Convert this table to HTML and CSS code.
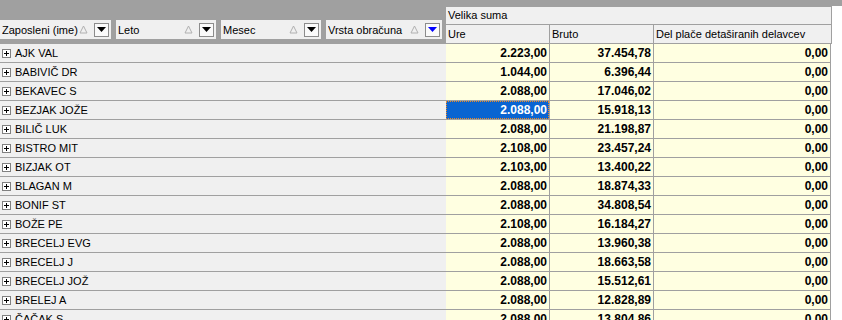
FILE: index.html
```html
<!DOCTYPE html>
<html>
<head>
<meta charset="utf-8">
<link rel="stylesheet" href="styles.css">
</head>
<body>
<div class="grid">
  <div class="head">
    <div class="filters">
      <div class="fbox w1"><span class="flabel">Zaposleni (ime)</span><svg class="sorti" width="9" height="9" viewBox="0 0 9 9"><path d="M4.5 1 L8 8 L1 8 Z" fill="none" stroke="#b0b0b0" stroke-width="1"/></svg><span class="dd"><svg width="9" height="5" viewBox="0 0 9 5"><path d="M0 0 H9 L4.5 5 Z" fill="#000"/></svg></span></div>
      <div class="fbox w2"><span class="flabel">Leto</span><svg class="sorti" width="9" height="9" viewBox="0 0 9 9"><path d="M4.5 1 L8 8 L1 8 Z" fill="none" stroke="#b0b0b0" stroke-width="1"/></svg><span class="dd"><svg width="9" height="5" viewBox="0 0 9 5"><path d="M0 0 H9 L4.5 5 Z" fill="#000"/></svg></span></div>
      <div class="fbox w3"><span class="flabel">Mesec</span><svg class="sorti" width="9" height="9" viewBox="0 0 9 9"><path d="M4.5 1 L8 8 L1 8 Z" fill="none" stroke="#b0b0b0" stroke-width="1"/></svg><span class="dd"><svg width="9" height="5" viewBox="0 0 9 5"><path d="M0 0 H9 L4.5 5 Z" fill="#000"/></svg></span></div>
      <div class="fbox w4"><span class="flabel">Vrsta obračuna</span><svg class="sorti" width="9" height="9" viewBox="0 0 9 9"><path d="M4.5 1 L8 8 L1 8 Z" fill="none" stroke="#b0b0b0" stroke-width="1"/></svg><span class="dd"><svg width="9" height="5" viewBox="0 0 9 5"><path d="M0 0 H9 L4.5 5 Z" fill="#0000ff"/></svg></span></div>
    </div>
    <div class="colheads">
      <div class="hgroup">Velika suma</div>
      <div class="hcols">
        <div class="hc c1">Ure</div>
        <div class="hc c2">Bruto</div>
        <div class="hc c3">Del plače detaširanih delavcev</div>
      </div>
    </div>
    <div class="rest"></div>
  </div>
  <div class="body" id="rows"></div>
</div>
<script src="app.js"></script>
</body>
</html>
```
FILE: app.js
```js
const data = [
  ["AJK VAL","2.223,00","37.454,78"],
  ["BABIVIČ DR","1.044,00","6.396,44"],
  ["BEKAVEC S","2.088,00","17.046,02"],
  ["BEZJAK JOŽE","2.088,00","15.918,13"],
  ["BILIČ LUK","2.088,00","21.198,87"],
  ["BISTRO MIT","2.108,00","23.457,24"],
  ["BIZJAK OT","2.103,00","13.400,22"],
  ["BLAGAN M","2.088,00","18.874,33"],
  ["BONIF ST","2.088,00","34.808,54"],
  ["BOŽE PE","2.108,00","16.184,27"],
  ["BRECELJ EVG","2.088,00","13.960,38"],
  ["BRECELJ J","2.088,00","18.663,58"],
  ["BRECELJ JOŽ","2.088,00","15.512,61"],
  ["BRELEJ A","2.088,00","12.828,89"],
  ["ČAČAK S","2.088,00","13.804,86"]
];
const host = document.getElementById('rows');
data.forEach((r, i) => {
  const row = document.createElement('div');
  row.className = 'row';
  row.innerHTML =
    '<div class="name"><span class="exp"><svg width="9" height="9" viewBox="0 0 9 9"><rect x="0.5" y="0.5" width="8" height="8" fill="#fff" stroke="#808080"/><path d="M2 4.5 H7 M4.5 2 V7" stroke="#000" stroke-width="1"/></svg></span><span>' + r[0] + '</span></div>' +
    '<div class="cell c1' + (i === 3 ? ' sel' : '') + '"><span>' + r[1] + '</span></div>' +
    '<div class="cell c2">' + r[2] + '</div>' +
    '<div class="cell c3">0,00</div>';
  host.appendChild(row);
});
```
FILE: styles.css
```css
html, body {
  margin: 0;
  padding: 0;
  background: #ffffff;
}
body {
  font-family: "Liberation Sans", Arial, sans-serif;
  font-size: 11px;
  color: #000;
  width: 842px;
  height: 320px;
  overflow: hidden;
}
.head {
  display: flex;
  height: 44px;
  background: #a0a0a0;
}
.filters {
  width: 446px;
  display: flex;
  gap: 5px;
  padding-top: 20px;
  box-sizing: border-box;
  align-items: flex-start;
}
.fbox {
  height: 19px;
  background: #f0f0f0;
  display: flex;
  align-items: center;
  padding-left: 2px;
  padding-right: 2px;
  box-sizing: border-box;
}
.w1 { width: 111px; }
.w2 { width: 100px; }
.w3 { width: 100px; }
.w4 { width: 116px; }
.flabel {
  flex: 1;
  white-space: nowrap;
  overflow: hidden;
}
.sorti {
  margin-right: 6px;
  margin-top: -1px;
}
.dd {
  width: 13px;
  height: 12px;
  border: 1px solid #8c8c8c;
  background: #fafafa;
  display: flex;
  align-items: center;
  justify-content: center;
}
.colheads {
  width: 385px;
  margin-top: 6px;
  background: #f0f0f0;
  border-top: 1px solid #a0a0a0;
  border-right: 1px solid #a0a0a0;
  display: flex;
  flex-direction: column;
}
.hgroup {
  height: 17px;
  line-height: 17px;
  padding-left: 2px;
  border-bottom: 1px solid #a0a0a0;
}
.hcols {
  display: flex;
  height: 18px;
  border-bottom: 1px solid #a0a0a0;
}
.hc {
  line-height: 18px;
  padding-left: 2px;
  box-sizing: border-box;
  white-space: nowrap;
}
.c1 { width: 104px; border-right: 1px solid #a0a0a0; }
.c2 { width: 104px; border-right: 1px solid #a0a0a0; }
.c3 { width: 177px; }
.rest {
  flex: 1;
  margin-top: 6px;
  background: #ffffff;
}
.row {
  display: flex;
  height: 19px;
}
.name {
  width: 446px;
  background: #f0f0f0;
  border-bottom: 1px solid #a0a0a0;
  box-sizing: border-box;
  display: flex;
  align-items: center;
  padding-left: 2px;
  gap: 4px;
}
.exp {
  display: flex;
  width: 9px;
  height: 9px;
}
.cell {
  background: #ffffe1;
  border-bottom: 1px solid #a0a0a0;
  box-sizing: border-box;
  font-weight: bold;
  font-size: 12px;
  text-align: right;
  line-height: 18px;
  padding-right: 2px;
}
.cell.c3 {
  border-right: 1px solid #a0a0a0;
  width: 177px;
}
.cell.sel {
  background: #0a64d2;
  color: #ffffff;
  padding: 0;
}
.cell.sel span {
  display: block;
  height: 18px;
  box-sizing: border-box;
  border: 1px dotted #f08a24;
  line-height: 16px;
  padding-right: 1px;
}
```
